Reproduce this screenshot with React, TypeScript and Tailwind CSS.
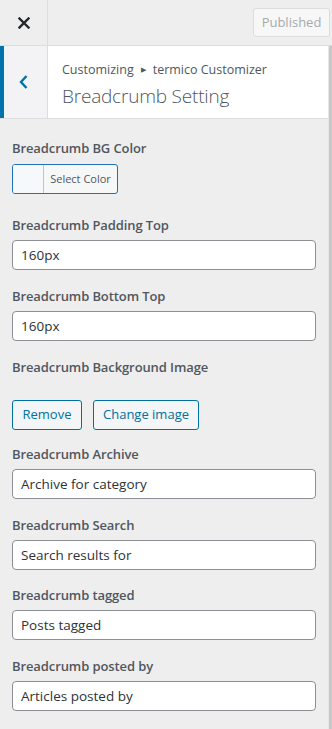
import React from 'react';

const font = { fontFamily: '"Open Sans", "Noto Sans", sans-serif' };

// text fields in the panel
const textFields = [
  { label: 'Breadcrumb Archive', value: 'Archive for category' },
  { label: 'Breadcrumb Search', value: 'Search results for' },
  { label: 'Breadcrumb tagged', value: 'Posts tagged' },
  { label: 'Breadcrumb posted by', value: 'Articles posted by' },
];

function Label({ children }: { children: React.ReactNode }) {
  return (
    <div className="h-5 text-[13px] leading-5 font-semibold text-[#50575e] tracking-[-0.1px]">{children}</div>
  );
}

function TextInput({ value }: { value: string }) {
  return (
    <div className="mt-[5px] h-[30px] w-[304px] rounded-[4px] border border-[#8c8f94] bg-white pl-[8px] flex items-center text-[13.5px] text-[#2c3338]">
      {value}
    </div>
  );
}

export default function App() {
  return (
    <div className="w-[332px] h-[729px] bg-[#eeeeee] overflow-hidden flex flex-col" style={font}>
      {/* Top bar */}
      <div className="h-[46px] shrink-0 flex border-b border-[#dddddd] bg-[#eeeeee]">
        <div className="w-[48px] h-full border-r border-[#dddddd] flex items-center justify-center">
          <svg width="12" height="12" viewBox="0 0 12 12">
            <path d="M1.5 1.5 L10.5 10.5 M10.5 1.5 L1.5 10.5" stroke="#23282d" strokeWidth="2.4" strokeLinecap="square" />
          </svg>
        </div>
        <div className="flex-1 flex items-center justify-end pr-[2px]">
          <div className="h-[29px] w-[77px] rounded-[3px] border border-[#dddddd] bg-[#f7f7f7] flex items-center justify-center text-[13px] text-[#a7aaad]">
            Published
          </div>
        </div>
      </div>

      <div className="flex flex-1">
        <div className="w-[328px] flex flex-col">
          {/* Section header */}
          <div className="h-[73px] flex bg-white border-b border-[#dddddd]">
            <div className="w-[48px] h-full bg-[#f3f3f5] border-l-4 border-[#0073aa] border-r border-r-[#dddddd] flex items-center justify-center pr-[4px]">
              <svg width="10" height="16" viewBox="0 0 10 16">
                <path d="M7.5 2 L2 8 L7.5 14" stroke="#0073aa" strokeWidth="2.4" fill="none" />
              </svg>
            </div>
            <div className="flex-1 pl-[14px] pt-[15px]">
              <div className="text-[12.5px] leading-[18px] text-[#50575e] flex items-center">
                Customizing
                <span className="mx-[7px] text-[7px] text-[#50575e]">▶</span>
                termico Customizer
              </div>
              <div className="mt-[5px] text-[19px] leading-6 font-light text-[#50575e] tracking-[-0.2px]">Breadcrumb Setting</div>
            </div>
          </div>

          {/* Controls */}
          <div className="pl-[12px] pt-[19px]">
            <Label>Breadcrumb BG Color</Label>
            <div className="mt-[6px] h-[30px] w-[106px] rounded-[3px] border border-[#2271b1] bg-[#f6f7f7] flex overflow-hidden">
              <div className="w-[31px] h-full bg-[#f6f9fc] border-r border-[#c3c4c7]" />
              <div className="flex-1 flex items-center justify-center text-[11px] text-[#50575e]">Select Color</div>
            </div>

            <div className="mt-[21px]">
              <Label>Breadcrumb Padding Top</Label>
              <TextInput value="160px" />
            </div>

            <div className="mt-[16px]">
              <Label>Breadcrumb Bottom Top</Label>
              <TextInput value="160px" />
            </div>

            <div className="mt-[16px]">
              <Label>Breadcrumb Background Image</Label>
              <div className="mt-[23px] flex gap-[11px]">
                <div className="h-[30px] w-[70px] rounded-[3px] border border-[#0071a1] bg-[#f3f5f6] flex items-center justify-center text-[13px] text-[#0071a1]">
                  Remove
                </div>
                <div className="h-[30px] w-[106px] rounded-[3px] border border-[#0071a1] bg-[#f3f5f6] flex items-center justify-center text-[13px] text-[#0071a1]">
                  Change image
                </div>
              </div>
            </div>

            {textFields.map((f, i) => (
              <div key={f.label} className={i === 0 ? 'mt-[14px]' : i === 2 ? 'mt-[15px]' : 'mt-[16px]'}>
                <Label>{f.label}</Label>
                <TextInput value={f.value} />
              </div>
            ))}
          </div>
        </div>

        {/* scrollbar */}
        <div className="w-[4px] flex">
          <div className="w-[1px] bg-[#e6e6e6]" />
          <div className="flex-1 bg-[#c8c8c8]" />
        </div>
      </div>
    </div>
  );
}
